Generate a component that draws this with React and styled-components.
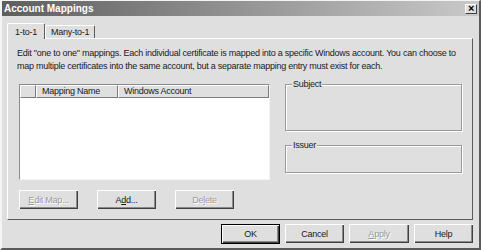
import React from 'react'
import styled, { createGlobalStyle } from 'styled-components'

const GlobalStyle = createGlobalStyle`
  html, body {
    margin: 0;
    padding: 0;
    background: #dfdfdf;
  }
  * {
    box-sizing: border-box;
  }
`

export default function App() {
    return (
        <>
            <GlobalStyle />
            <Window>
                <TitleBar>
                    <Title>Account Mappings</Title>
                    <CloseButton>×</CloseButton>
                </TitleBar>
                <TabRow>
                    <Tab active>1-to-1</Tab>
                    <Tab>Many-to-1</Tab>
                </TabRow>
                <Panel>
                    <Description>
                        Edit "one to one" mappings. Each individual certificate is mapped into a specific Windows account. You can choose to
                        <br />
                        map multiple certificates into the same account, but a separate mapping entry must exist for each.
                    </Description>
                    <MainRow>
                        <ListView>
                            <ListHeader>
                                <HeaderCell width={16}></HeaderCell>
                                <HeaderCell width={82}>Mapping Name</HeaderCell>
                                <HeaderCell width={151}>Windows Account</HeaderCell>
                            </ListHeader>
                        </ListView>
                        <SideColumn>
                            <GroupBox height={47}>
                                <GroupLabel>Subject</GroupLabel>
                            </GroupBox>
                            <GroupBox height={28}>
                                <GroupLabel>Issuer</GroupLabel>
                            </GroupBox>
                        </SideColumn>
                    </MainRow>
                    <ButtonRow>
                        <Button disabled><u>E</u>dit Map...</Button>
                        <Button>A<u>d</u>d...</Button>
                        <Button disabled>De<u>l</u>ete</Button>
                    </ButtonRow>
                </Panel>
                <Footer>
                    <Button isDefault>OK</Button>
                    <Button>Cancel</Button>
                    <Button disabled wide><u>A</u>pply</Button>
                    <Button>Help</Button>
                </Footer>
            </Window>
        </>
    )
}

const Window = styled.div`
  width: 481px;
  height: 250px;
  background: #dfdfdf;
  border-left: 2px solid #f4f4f4;
  border-top: 1px solid #f4f4f4;
  border-right: 2px solid #5a5a5a;
  border-bottom: 2px solid #5a5a5a;
  font-family: "Liberation Sans", Arial, sans-serif;
  font-size: 9px;
  letter-spacing: -0.25px;
  color: #1a1a1a;
  display: flex;
  flex-direction: column;
`

const TitleBar = styled.div`
  height: 15px;
  background: linear-gradient(to right, #5e5e5e, #c9c9c9);
  display: flex;
  align-items: center;
  justify-content: space-between;
  padding: 0 2px;
`

const Title = styled.span`
  color: #fff;
  font-weight: bold;
  font-size: 10px;
  letter-spacing: 0;
`

const CloseButton = styled.span`
  width: 12px;
  height: 10px;
  background: #dfdfdf;
  border-top: 1px solid #fff;
  border-left: 1px solid #fff;
  border-right: 1px solid #404040;
  border-bottom: 1px solid #404040;
  font-size: 11px;
  font-weight: bold;
  line-height: 7px;
  text-align: center;
  color: #000;
`

const TabRow = styled.div`
  display: flex;
  align-items: flex-end;
  margin: 6px 0 0 5px;
  height: 16px;
`

const Tab = styled.div`
  height: ${p => (p.active ? '16px' : '13px')};
  padding: 0 ${p => (p.active ? '7px' : '5px')};
  margin-bottom: ${p => (p.active ? '-1px' : '0')};
  background: #dfdfdf;
  border-top: 1px solid #fff;
  border-left: 1px solid #fff;
  border-right: 1px solid #5a5a5a;
  border-radius: 2px 2px 0 0;
  display: flex;
  align-items: center;
  position: relative;
  z-index: ${p => (p.active ? 1 : 0)};
`

const Panel = styled.div`
  margin: 0 6px 0 5px;
  height: 182px;
  border-top: 1px solid #fff;
  border-left: 1px solid #fff;
  border-right: 1px solid #5a5a5a;
  border-bottom: 1px solid #5a5a5a;
  padding: 8px 0 0 9px;
  display: flex;
  flex-direction: column;
`

const Description = styled.p`
  margin: 0;
  line-height: 13px;
  white-space: nowrap;
`

const MainRow = styled.div`
  display: flex;
  margin-top: 11px;
  margin-left: 2px;
  gap: 15px;
`

const ListView = styled.div`
  width: 251px;
  height: 96px;
  background: #fff;
  border-top: 1px solid #8a8a8a;
  border-left: 1px solid #8a8a8a;
  border-right: 1px solid #f4f4f4;
  border-bottom: 1px solid #f4f4f4;
`

const ListHeader = styled.div`
  display: flex;
  height: 13px;
  background: #dfdfdf;
`

const HeaderCell = styled.div`
  width: ${p => p.width}px;
  border-top: 1px solid #fff;
  border-left: 1px solid #fff;
  border-right: 1px solid #7a7a7a;
  border-bottom: 1px solid #7a7a7a;
  padding-left: 5px;
  line-height: 11px;
  white-space: nowrap;
`

const SideColumn = styled.div`
  display: flex;
  flex-direction: column;
  gap: 14px;
  width: 177px;
`

const GroupBox = styled.div`
  position: relative;
  height: ${p => p.height}px;
  border: 1px solid #9a9a9a;
  box-shadow: 1px 1px 0 #fff, inset 1px 1px 0 #fff;
`

const GroupLabel = styled.span`
  position: absolute;
  top: -6px;
  left: 6px;
  padding: 0 1px;
  background: #dfdfdf;
  line-height: 11px;
`

const ButtonRow = styled.div`
  display: flex;
  gap: 19px;
  margin-top: 10px;
  margin-left: 2px;
`

const Button = styled.div`
  width: ${p => (p.wide ? '60px' : '59px')};
  height: ${p => (p.isDefault ? '20px' : '19px')};
  display: flex;
  align-items: center;
  justify-content: center;
  background: #dfdfdf;
  color: ${p => (p.disabled ? '#9a9a9a' : '#1a1a1a')};
  text-shadow: ${p => (p.disabled ? '1px 1px 0 #fff' : 'none')};
  border: ${p => (p.isDefault ? '1px solid #000' : '0')};
  box-shadow: inset 1px 1px 0 #fff, inset -1px -1px 0 #404040, inset -2px -2px 0 #8a8a8a;
  u {
    text-decoration: underline;
  }
`

const Footer = styled.div`
  display: flex;
  justify-content: flex-end;
  gap: 5px;
  margin: 4px 6px 0 0;
`
